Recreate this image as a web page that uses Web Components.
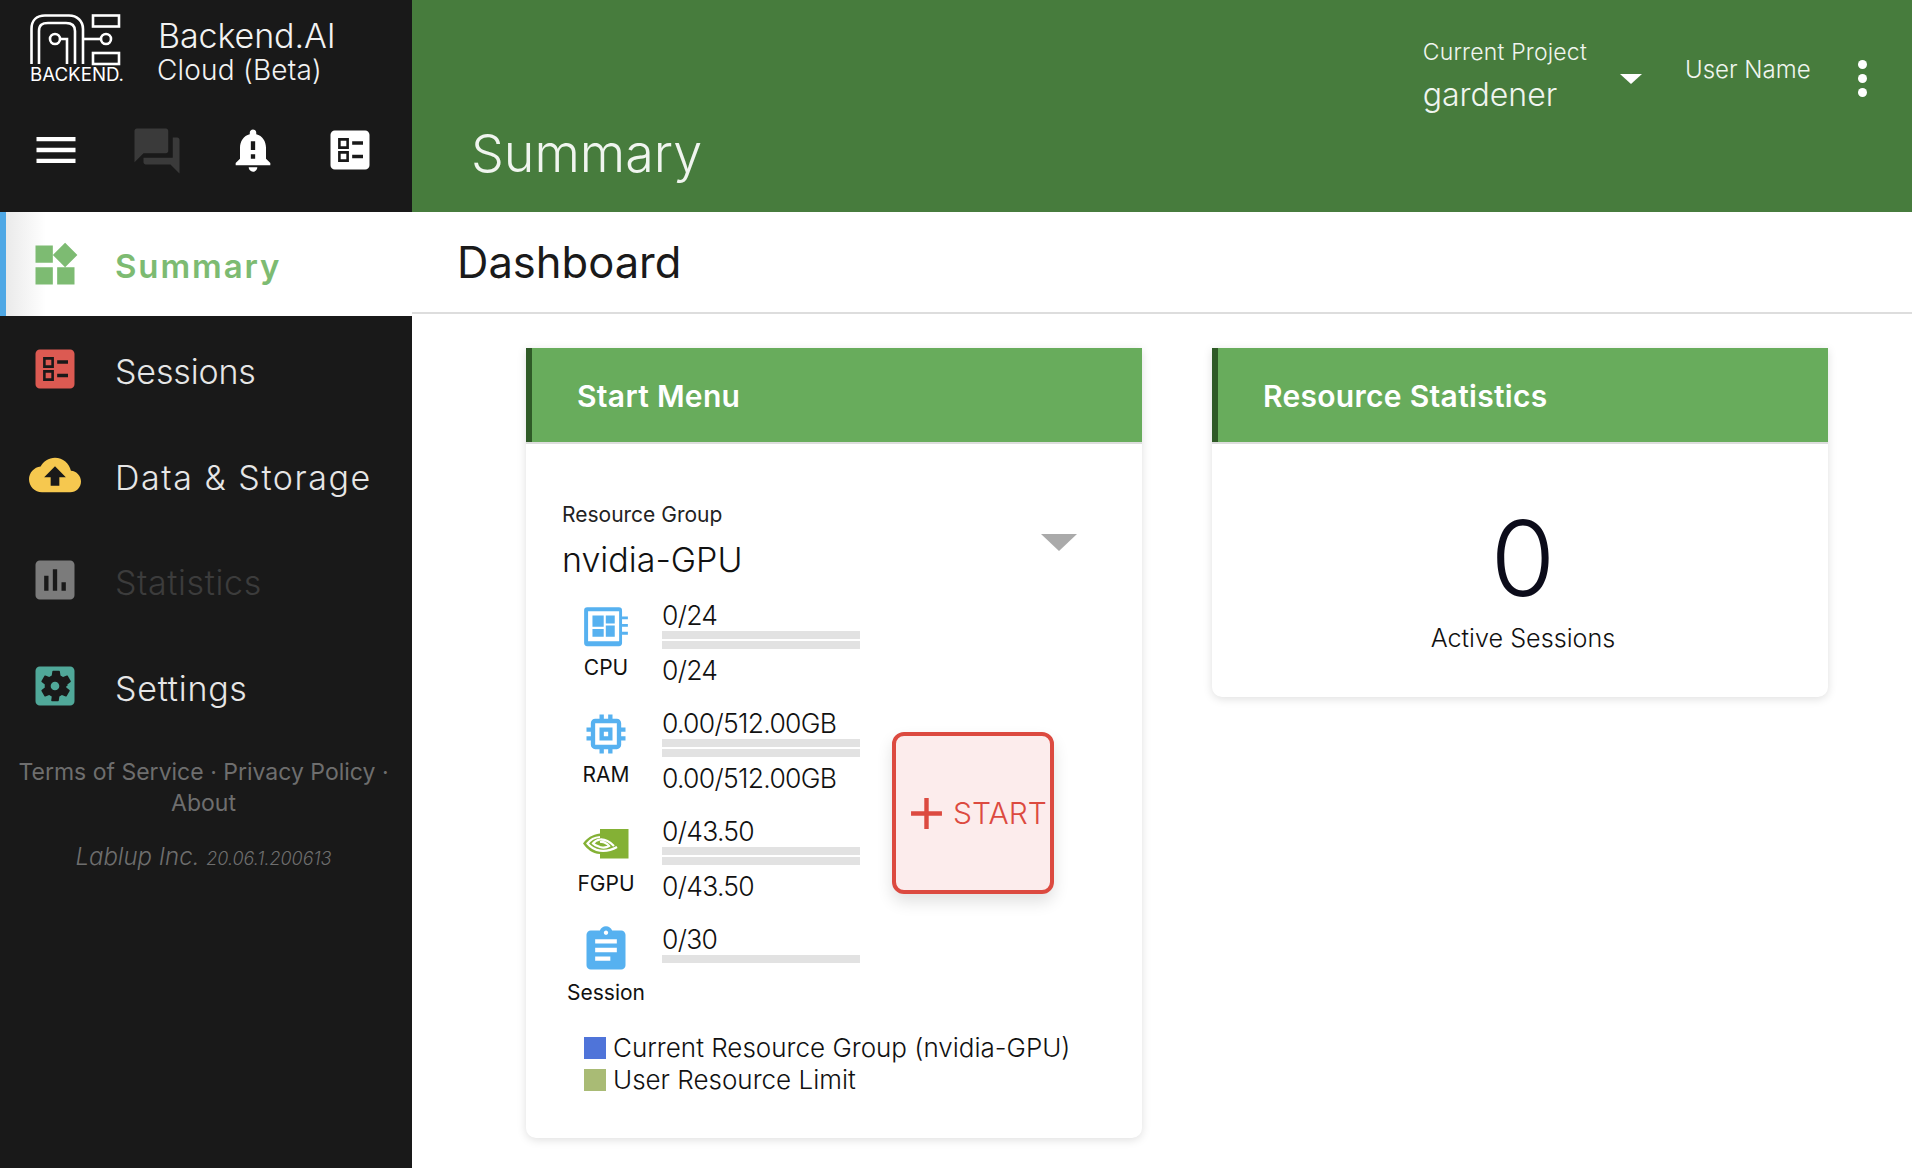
<!DOCTYPE html>
<html>
<head>
<meta charset="utf-8">
<title>Backend.AI</title>
<style>
  html, body { margin: 0; height: 100%; background: #fff; }
  body { font-family: Inter, "Noto Sans", sans-serif; }
</style>
</head>
<body>
<bai-app>
  <bai-sidebar slot="sidebar">
    <bai-nav-item active color="#7dbb72" label="Summary" icon="widgets" style="--ls:1.9px"></bai-nav-item>
    <bai-nav-item color="#dc5a52" label="Sessions" icon="sessions" style="--ls:-.15px"></bai-nav-item>
    <bai-nav-item color="#f6c84f" label="Data &amp; Storage" icon="cloud" style="--ls:1.55px"></bai-nav-item>
    <bai-nav-item disabled color="#7b7b7b" label="Statistics" icon="stats" style="--ls:.6px"></bai-nav-item>
    <bai-nav-item color="#50a899" label="Settings" icon="settings" style="--ls:.75px"></bai-nav-item>
  </bai-sidebar>
  <bai-appbar slot="appbar" title="Summary"></bai-appbar>
  <bai-page slot="page" heading="Dashboard">
    <bai-card heading="Start Menu" tall>
      <bai-start-panel></bai-start-panel>
    </bai-card>
    <bai-card heading="Resource Statistics">
      <bai-stat value="0" label="Active Sessions"></bai-stat>
    </bai-card>
  </bai-page>
</bai-app>

<script>
const ICONS = {
  menu: '<path d="M3 18h18v-2H3v2zm0-5h18v-2H3v2zm0-7v2h18V6H3z"/>',
  forum: '<path d="M21 6h-2v9H6v2c0 .55.45 1 1 1h11l4 4V7c0-.55-.45-1-1-1zm-4 6V3c0-.55-.45-1-1-1H3c-.55 0-1 .45-1 1v14l4-4h10c.55 0 1-.45 1-1z"/>',
  bell: '<path d="M18 16v-5c0-3.07-1.63-5.64-4.5-6.32V4c0-.83-.67-1.5-1.5-1.5s-1.5.67-1.5 1.5v.68C7.64 5.36 6 7.92 6 11v5l-2 2v1h16v-1l-2-2zm-5 0h-2v-2h2v2zm0-4h-2V8h2v4zm-1 10c1.1 0 2-.9 2-2h-4c0 1.1.9 2 2 2z"/>',
  sessions: '<path fill-rule="evenodd" d="M5 3h14c1.1 0 2 .9 2 2v14c0 1.1-.9 2-2 2H5c-1.1 0-2-.9-2-2V5c0-1.1.9-2 2-2zm1.500 3.500V11.500H11.500V6.500H6.500zm1.200 1.200h2.600v2.600H7.700V7.700zM13 8v1.600h5V8h-5zM6.500 12.500v5H11.500v-5H6.500zm1.200 1.200h2.600v2.600H7.700v-2.600zM13 14.200v1.600h5v-1.600h-5z"/>',
  widgets: '<path d="M13 13v8h8v-8h-8zM3 21h8v-8H3v8zM3 3v8h8V3H3zm13.66-1.310L11 7.340 16.660 13l5.660-5.660-5.660-5.650z"/>',
  cloud: '<path d="M19.350 10.040C18.670 6.590 15.640 4 12 4 9.110 4 6.600 5.640 5.350 8.040 2.340 8.360 0 10.910 0 14c0 3.310 2.690 6 6 6h13c2.760 0 5-2.240 5-5 0-2.640-2.050-4.780-4.650-4.960zM14 13v4h-4v-4H7l5-5 5 5h-3z"/>',
  stats: '<path d="M19 3H5c-1.100 0-2 .9-2 2v14c0 1.100.9 2 2 2h14c1.100 0 2-.9 2-2V5c0-1.100-.9-2-2-2zM9 17H7v-7h2v7zm4 0h-2V7h2v10zm4 0h-2v-4h2v4z"/>',
  settings: '<path d="M12 10c-1.100 0-2 .9-2 2s.9 2 2 2 2-.9 2-2-.9-2-2-2zm7-7H5c-1.110 0-2 .9-2 2v14c0 1.100.89 2 2 2h14c1.110 0 2-.9 2-2V5c0-1.100-.89-2-2-2zm-1.750 9c0 .23-.02.46-.05.68l1.480 1.160c.13.11.17.3.08.45l-1.400 2.420c-.09.15-.27.21-.43.15l-1.740-.7c-.36.28-.76.51-1.180.69l-.26 1.850c-.03.17-.18.3-.35.3h-2.800c-.17 0-.32-.13-.35-.3L10.500 16.850c-.42-.18-.82-.41-1.180-.69l-1.740.7c-.16.06-.34 0-.43-.15l-1.400-2.420c-.09-.15-.05-.34.08-.45l1.480-1.160c-.03-.22-.05-.45-.05-.68 0-.23.02-.46.05-.68l-1.480-1.160c-.13-.11-.17-.3-.08-.45l1.400-2.420c.09-.15.27-.21.43-.15l1.740.7c.36-.28.76-.51 1.180-.69l.26-1.850c.03-.17.18-.3.35-.3h2.800c.17 0 .32.13.35.3l.26 1.850c.42.18.82.41 1.180.69l1.740-.7c.16-.06.34 0 .43.15l1.400 2.420c.09.15.05.34-.08.45l-1.480 1.160c.03.22.05.45.05.68z"/>',
  memory: '<path d="M15 9H9v6h6V9zm-2 4h-2v-2h2v2zm8-2V9h-2V7c0-1.100-.9-2-2-2h-2V3h-2v2h-2V3H9v2H7c-1.100 0-2 .9-2 2v2H3v2h2v2H3v2h2v2c0 1.100.9 2 2 2h2v2h2v-2h2v2h2v-2h2c1.100 0 2-.9 2-2v-2h2v-2h-2v-2h2zm-4 6H7V7h10v10z"/>',
  assignment: '<path d="M19 3h-4.180C14.400 1.840 13.300 1 12 1c-1.300 0-2.400.84-2.820 2H5c-1.100 0-2 .9-2 2v14c0 1.100.9 2 2 2h14c1.100 0 2-.9 2-2V5c0-1.100-.9-2-2-2zm-7 0c.55 0 1 .45 1 1s-.45 1-1 1-1-.45-1-1 .45-1 1-1zm2 14H7v-2h7v2zm3-4H7v-2h10v2zm0-4H7V7h10v2z"/>',
  add: '<path d="M19 13h-6v6h-2v-6H5v-2h6V5h2v6h6v2z"/>',
  cpu: '<path fill-rule="evenodd" d="M3 2.500h15.200c1 0 1.500.5 1.500 1.500v15.700c0 1-.5 1.500-1.500 1.500H3c-1 0-1.500-.5-1.500-1.500V4c0-1 .5-1.500 1.500-1.500zM3.400 4.400v14.400h14.900V4.400H3.400z"/><path d="M5.500 6.500h5.400v5.400H5.500zM11.900 6.500h4.300v3.800h-4.300zM5.500 12.900h5.400v3.800H5.500zM11.900 11.300h4.300v5.400h-4.300zM19.700 6.900h2.800v1.400h-2.800zM19.700 10.500h2.800v1.400h-2.800zM19.700 14.300h2.800v1.400h-2.800z"/>'
};
function svg(name, size, fill) {
  return `<svg width="${size}" height="${size}" viewBox="0 0 24 24" fill="${fill || "currentColor"}" aria-hidden="true">${ICONS[name]}</svg>`;
}
const NVIDIA = `<svg width="46" height="30" viewBox="0 0 46 30" aria-hidden="true">
  <path fill="#84b135" d="M17 0H45.500V29.500H17V25C9 24.500 4 20 0 14.500 4 9 9 5.500 17 4.500z"/>
  <path fill="none" stroke="#fff" stroke-width="2.200" d="M17 8C11 8.500 7 11 4.500 14.500 7.500 18 11 21 17 21.700 23 22.300 29 21 34 18"/>
  <path fill="none" stroke="#fff" stroke-width="2.200" d="M17 13C20 12.500 23.500 14 26 17 23 19 20.500 19 17 18 14 17 11.500 16 10 14.500 12 12 14 11 17 10.500 22 10 27 13 31 17"/>
</svg>`;

class BaiApp extends HTMLElement {
  constructor() {
    super();
    this.attachShadow({ mode: "open" }).innerHTML = `
      <style>
        :host {
          display: grid;
          grid-template-columns: 412px 1fr;
          grid-template-rows: 212px 1fr;
          width: 1912px;
          height: 1168px;
          overflow: hidden;
          font-family: Inter, "Noto Sans", sans-serif;
        }
        .side { grid-row: 1 / 3; min-height: 0; }
      </style>
      <div class="side"><slot name="sidebar"></slot></div>
      <slot name="appbar"></slot>
      <slot name="page"></slot>
    `;
  }
}

class BaiLogo extends HTMLElement {
  constructor() {
    super();
    this.attachShadow({ mode: "open" }).innerHTML = `
      <style>
        :host { display: flex; align-items: flex-start; padding: 14px 0 0 30px; height: 80px; box-sizing: border-box; color: #f2f2f2; }
        svg { display: block; flex: none; }
        .txt { margin-left: 32px; font-weight: 300; }
        .a { font-size: 34px; line-height: 38px; letter-spacing: -.1px; margin: 3px 0 0 1px; }
        .b { font-size: 28px; line-height: 30px; letter-spacing: .2px; }
      </style>
      <svg width="95" height="70" viewBox="0 0 95 70" fill="none" stroke="#fff" stroke-width="2.600">
        <path d="M1.500 50V15C1.500 6 7 1.500 15 1.500H39C47 1.500 53 7 53 15V50"/>
        <path d="M9 50V17C9 11 12 9 18 9H36C42 9 45 12 45 17V50"/>
        <path d="M53 25H71"/>
        <circle cx="25" cy="25" r="5"/><path d="M30 25H37V50"/><circle cx="76" cy="25" r="5"/>
        <rect x="63" y="1.500" width="26" height="11"/><rect x="63" y="39" width="26" height="11"/>
        <text x="0" y="67" textLength="94" lengthAdjust="spacingAndGlyphs" font-size="18" font-family="Inter, sans-serif" fill="#fff" stroke="none">BACKEND.</text>
      </svg>
      <div class="txt"><div class="a">Backend.AI</div><div class="b">Cloud (Beta)</div></div>
    `;
  }
}

class BaiSidebar extends HTMLElement {
  constructor() {
    super();
    this.attachShadow({ mode: "open" }).innerHTML = `
      <style>
        :host { display: block; height: 100%; background: #191919; }
        .head { height: 212px; box-sizing: border-box; }
        .tools { display: flex; height: 132px; align-items: flex-start; }
        .tools svg { display: block; }
        .tool { margin-top: 44px; }
        .t1 { margin-left: 30px; color: #fff; }
        .t2 { margin-left: 48px; color: #3a3a3a; }
        .t3 { margin-left: 43px; color: #fff; }
        .t4 { margin-left: 45px; color: #fff; }
        footer { text-align: center; color: #6e6e6e; margin-top: 19px; padding-right: 5px; }
        .links { font-size: 23px; line-height: 31px; font-weight: 400; }
        .ver { margin-top: 22px; font-size: 24px; line-height: 31px; font-style: italic; font-weight: 300; }
        .ver small { font-size: 18px; }
      </style>
      <div class="head">
        <bai-logo></bai-logo>
        <div class="tools">
          <div class="tool t1">${svg("menu", 52)}</div>
          <div class="tool t2">${svg("forum", 54)}</div>
          <div class="tool t3">${svg("bell", 52)}</div>
          <div class="tool t4">${svg("sessions", 52)}</div>
        </div>
      </div>
      <slot></slot>
      <footer>
        <div class="links">Terms of Service · Privacy Policy ·<br>About</div>
        <div class="ver">Lablup Inc. <small>20.06.1.200613</small></div>
      </footer>
    `;
  }
}

class BaiNavItem extends HTMLElement {
  connectedCallback() {
    const color = this.getAttribute("color");
    if (this.shadowRoot) return;
    this.attachShadow({ mode: "open" }).innerHTML = `
      <style>
        :host {
          display: flex;
          align-items: center;
          height: 105.500px;
          box-sizing: border-box;
          padding-left: 29px;
          color: #e6e6e6;
          font-size: 34px;
          font-weight: 300;
          letter-spacing: var(--ls, 0);
        }
        :host([active]) {
          height: 104px;
          padding-left: 23px;
          border-left: 6px solid #4fa8e5;
          background: linear-gradient(90deg, #eaeaea, #fff 40px);
          color: ${color};
          font-size: 33px;
          font-weight: 600;
        }
        :host([disabled]) { color: #3c3c3c; }
        .ico { color: ${color}; width: 52px; height: 52px; margin-right: 34px; margin-top: 1px; flex: none; }
        span { margin-top: 6px; }
        :host([active]) span { margin-top: 4px; }
        svg { display: block; }
      </style>
      <div class="ico">${svg(this.getAttribute("icon"), 52)}</div>
      <span>${this.getAttribute("label").replace("&", "&amp;")}</span>
    `;
  }
}

class BaiAppbar extends HTMLElement {
  connectedCallback() {
    if (this.shadowRoot) return;
    this.attachShadow({ mode: "open" }).innerHTML = `
      <style>
        :host { display: flex; height: 212px; background: #477c3d; color: #f0f5ef; font-weight: 300; box-sizing: border-box; position: relative; padding-left: 60px; }
        h1 { margin: 124px 0 0 -1px; font-size: 52px; line-height: 60px; font-weight: 300; }
        .right { margin-left: auto; display: flex; align-items: flex-start; padding-right: 45px; }
        .proj { margin-top: 37px; }
        .proj .l { font-size: 23px; line-height: 30px; letter-spacing: .2px; }
        .proj .v { font-size: 32px; line-height: 40px; margin-top: 8px; }
        .arrow { width: 0; height: 0; border: 11px solid transparent; border-top: 10px solid #fff; border-bottom: 0; margin: 74px 43px 0 33px; }
        .user { font-size: 24px; line-height: 30px; margin-top: 55px; width: 125px; white-space: nowrap; }
        .dots { margin: 60px 0 0 48px; display: grid; gap: 5px; }
        .dots i { display: block; width: 9px; height: 9px; background: #fff; border-radius: 50%; }
      </style>
      <h1>${this.getAttribute("title")}</h1>
      <div class="right">
        <div class="proj"><div class="l">Current Project</div><div class="v">gardener</div></div>
        <div class="arrow"></div>
        <div class="user">User Name</div>
        <div class="dots"><i></i><i></i><i></i></div>
      </div>
    `;
  }
}

class BaiPage extends HTMLElement {
  connectedCallback() {
    if (this.shadowRoot) return;
    this.attachShadow({ mode: "open" }).innerHTML = `
      <style>
        :host { display: block; background: #fff; color: #111; }
        h2 { margin: 0; height: 102px; box-sizing: border-box; padding-left: 45px; border-bottom: 2px solid #ddd; font-size: 43.500px; font-weight: 400; line-height: 100px; color: #1a1a1a; }
        .cards { display: flex; align-items: flex-start; gap: 70px; padding: 34px 0 0 114px; }
      </style>
      <h2>${this.getAttribute("heading")}</h2>
      <div class="cards"><slot></slot></div>
    `;
  }
}

class BaiCard extends HTMLElement {
  connectedCallback() {
    if (this.shadowRoot) return;
    this.attachShadow({ mode: "open" }).innerHTML = `
      <style>
        :host { display: block; width: 616px; background: #fff; border-radius: 0 0 10px 10px; box-shadow: 0 2px 10px rgba(0,0,0,.13); overflow: hidden; }
        h3 { margin: 0; height: 94px; box-sizing: border-box; background: #68ac5c; border-left: 6px solid #2f5a27; padding-left: 45px; color: #fff; font-size: 30px; letter-spacing: .3px; font-weight: 600; line-height: 96px; box-shadow: 0 2px 0 #ddd; position: relative; }
      </style>
      <h3>${this.getAttribute("heading")}</h3>
      <slot></slot>
    `;
  }
}

class BaiStat extends HTMLElement {
  connectedCallback() {
    if (this.shadowRoot) return;
    this.attachShadow({ mode: "open" }).innerHTML = `
      <style>
        :host { display: flex; flex-direction: column; align-items: center; height: 255px; color: #111; padding-left: 6px; }
        .v { font-size: 105px; line-height: 120px; font-weight: 300; margin-top: 56px; color: #0c0c1a; }
        .l { font-size: 25.200px; line-height: 34px; margin-top: 3px; font-weight: 300; }
      </style>
      <div class="v">${this.getAttribute("value")}</div>
      <div class="l">${this.getAttribute("label")}</div>
    `;
  }
}

class BaiResourceRow extends HTMLElement {
  connectedCallback() {
    if (this.shadowRoot) return;
    const kind = this.getAttribute("icon");
    const used = this.getAttribute("value");
    const total = this.getAttribute("second");
    const w = this.getAttribute("size") || 52;
    this.attachShadow({ mode: "open" }).innerHTML = `
      <style>
        :host { display: grid; grid-template-columns: 88px 198px; column-gap: 12px; height: var(--row, 108px); font-weight: 300; }
        .res { display: flex; flex-direction: column; align-items: center; height: 100%; }
        .res .ic { height: var(--ic, 52px); margin-top: var(--icm, 0); display: flex; align-items: center; justify-content: center; color: #56b1f0; }
        .res .lb { font-size: 21px; line-height: 28px; color: #111; margin-top: var(--lbm, 3px); font-weight: 400; white-space: nowrap; }
        svg { display: block; }
        .val { font-size: 26.500px; line-height: 30px; color: #111; height: 30px; letter-spacing: -.7px; }
        .bar { height: 8px; background: #e2e2e2; margin-top: 2px; }
        .val + .bar { margin-top: 1px; }
        .val.low { margin-top: 6px; }
      </style>
      <div class="res">
        <div class="ic">${kind === "nvidia" ? NVIDIA : svg(kind, w)}</div>
        <div class="lb">${this.getAttribute("label")}</div>
      </div>
      <div>
        <div class="val">${used}</div>
        <div class="bar"></div>
        ${total ? `<div class="bar"></div><div class="val low">${total}</div>` : ""}
      </div>
    `;
  }
}

class BaiStartButton extends HTMLElement {
  constructor() {
    super();
    this.attachShadow({ mode: "open" }).innerHTML = `
      <style>
        :host { display: flex; align-items: center; box-sizing: border-box; width: 162px; height: 162px; border: 4px solid #dc4a40; border-radius: 12px; background: #fcecec; color: #dc4a40; box-shadow: 0 8px 16px rgba(0,0,0,.12); font-size: 30px; font-weight: 300; padding-left: 4px; white-space: nowrap; }
        svg { display: block; flex: none; }
      </style>
      ${svg("add", 53)}<span>START</span>
    `;
  }
}

class BaiStartPanel extends HTMLElement {
  constructor() {
    super();
    this.attachShadow({ mode: "open" }).innerHTML = `
      <style>
        :host { display: block; height: 696px; box-sizing: border-box; padding: 59px 0 0 36px; color: #111; }
        .sel { position: relative; width: 515px; }
        .sel .l { font-size: 21px; line-height: 28px; font-weight: 400; color: #222; }
        .sel .v { font-size: 34px; line-height: 44px; margin-top: 9px; font-weight: 300; }
        .sel .arrow { position: absolute; right: 0; top: 33px; width: 0; height: 0; border: 18px solid transparent; border-top: 17px solid #aaa; border-bottom: 0; }
        .body { display: flex; margin-top: 18px; }
        bai-start-button { margin: 132px 0 0 32px; }
        .legend { margin: 22px 0 0 22px; font-size: 26px; line-height: 32px; font-weight: 300; }
        .legend div { display: flex; align-items: center; }
        .legend i { display: block; width: 22px; height: 22px; margin-right: 7px; }
      </style>
      <div class="sel">
        <div class="l">Resource Group</div>
        <div class="v">nvidia-GPU</div>
        <div class="arrow"></div>
      </div>
      <div class="body">
        <div>
          <bai-resource-row icon="cpu" size="50" label="CPU" value="0/24" second="0/24" style="--ic:50px;--icm:2px;--lbm:2px"></bai-resource-row>
          <bai-resource-row icon="memory" label="RAM" value="0.00/512.00GB" second="0.00/512.00GB" style="--lbm:1px"></bai-resource-row>
          <bai-resource-row icon="nvidia" label="FGPU" value="0/43.50" second="0/43.50" style="--ic:30px;--icm:13px;--lbm:11px"></bai-resource-row>
          <bai-resource-row icon="assignment" label="Session" value="0/30" style="--lbm:3px;--row:86px"></bai-resource-row>
        </div>
        <bai-start-button></bai-start-button>
      </div>
      <div class="legend">
        <div><i style="background:#4f74d9"></i>Current Resource Group (nvidia-GPU)</div>
        <div><i style="background:#a9bb75"></i>User Resource Limit</div>
      </div>
    `;
  }
}

customElements.define("bai-app", BaiApp);
customElements.define("bai-logo", BaiLogo);
customElements.define("bai-sidebar", BaiSidebar);
customElements.define("bai-nav-item", BaiNavItem);
customElements.define("bai-appbar", BaiAppbar);
customElements.define("bai-page", BaiPage);
customElements.define("bai-card", BaiCard);
customElements.define("bai-stat", BaiStat);
customElements.define("bai-resource-row", BaiResourceRow);
customElements.define("bai-start-button", BaiStartButton);
customElements.define("bai-start-panel", BaiStartPanel);
</script>
</body>
</html>
